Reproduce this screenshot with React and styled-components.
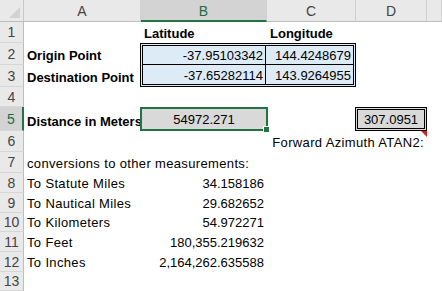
import React from 'react';
import styled, { createGlobalStyle, css } from 'styled-components';

const GlobalStyle = createGlobalStyle`
  html, body {
    margin: 0;
    padding: 0;
    background: #fff;
  }
  body {
    font-family: "Liberation Sans", Arial, sans-serif;
    color: #000;
  }
`;

const COLS = [24, 117, 126, 89, 71, 15];
const ROWS = [22, 21, 22, 22, 20, 24, 21, 21, 20, 20, 19, 20, 20, 19];

const Sheet = styled.div`
  display: grid;
  grid-template-columns: ${COLS.map(c => c + 'px').join(' ')};
  grid-template-rows: ${ROWS.map(r => r + 'px').join(' ')};
  width: 442px;
  height: 291px;
  overflow: hidden;
  font-size: 13px;
`;

const Corner = styled.div`
  grid-column: 1;
  grid-row: 1;
  background: #e9e9e9;
  border-right: 1px solid #c8c8c8;
  border-bottom: 1px solid #bdbdbd;
  position: relative;
  &::after {
    content: '';
    position: absolute;
    right: 3px;
    bottom: 3px;
    border-style: solid;
    border-width: 0 0 11px 11px;
    border-color: transparent transparent #d2d2d2 transparent;
  }
`;

const ColHead = styled.div`
  grid-column: ${p => p.col};
  grid-row: 1;
  display: flex;
  align-items: center;
  justify-content: center;
  background: ${p => (p.selected ? '#d3d3d3' : '#e9e9e9')};
  color: ${p => (p.selected ? '#1e6b41' : '#444')};
  border-right: 1px solid #d0d0d0;
  border-bottom: ${p => (p.selected ? '2px solid #217346' : '1px solid #bdbdbd')};
  font-size: 14px;
  padding-top: ${p => (p.selected ? '2px' : '1px')};
`;

const RowHead = styled.div`
  grid-column: 1;
  grid-row: ${p => p.row};
  display: flex;
  align-items: center;
  justify-content: center;
  background: ${p => (p.selected ? '#d3d3d3' : '#e9e9e9')};
  color: ${p => (p.selected ? '#1e6b41' : '#444')};
  border-right: ${p => (p.selected ? '2px solid #217346' : '1px solid #bdbdbd')};
  border-bottom: 1px solid #d6d6d6;
  font-size: 14px;
`;

const Cell = styled.div`
  grid-column: ${p => p.col} / span ${p => p.span || 1};
  grid-row: ${p => p.row};
  display: flex;
  align-items: flex-end;
  justify-content: ${p =>
    p.align === 'right' ? 'flex-end' : p.align === 'center' ? 'center' : 'flex-start'};
  padding: 0 3px 2px 3px;
  min-width: 0;
  white-space: nowrap;
  font-weight: ${p => (p.bold ? 700 : 400)};
  letter-spacing: ${p => (p.bold || p.numeric ? '0' : '0.35px')};
  overflow: ${p => (p.clip ? 'hidden' : 'visible')};
  position: relative;
`;

const Table = styled.div`
  grid-column: 3 / span 2;
  grid-row: 3 / span 2;
  display: grid;
  grid-template-columns: 123px 1fr;
  grid-template-rows: 1fr 1fr;
  margin: 0 0 0 -1px;
  border: 3px double #000;
  background: #ddebf7;
  z-index: 1;
`;

const TableCell = styled.div`
  display: flex;
  align-items: flex-end;
  justify-content: flex-end;
  padding: 0 2px 1px 3px;
  ${p => p.right && css`border-right: 1px solid #000;`}
  ${p => p.bottom && css`border-bottom: 1px solid #000;`}
`;

const GrayBox = styled.div`
  grid-column: ${p => p.col};
  grid-row: ${p => p.row};
  display: flex;
  align-items: center;
  justify-content: center;
  background: #d9d9d9;
  padding-top: 1px;
  position: relative;
  ${p =>
    p.active
      ? css`
          border: 2px solid #217346;
          margin: 0 -1px 0 -1px;
          &::after {
            content: '';
            position: absolute;
            right: -4px;
            bottom: -4px;
            width: 5px;
            height: 5px;
            background: #217346;
            border: 1px solid #fff;
          }
        `
      : css`
          border: 3px double #000;
          margin: 0 0 0 -1px;
        `}
`;

const Comment = styled(Cell)`
  &::before {
    content: '';
    position: absolute;
    right: 0;
    top: 0;
    border-style: solid;
    border-width: 0 6px 6px 0;
    border-color: transparent #d81f1f transparent transparent;
  }
`;

const conversions = [
  ['To Statute Miles', '34.158186'],
  ['To Nautical Miles', '29.682652'],
  ['To Kilometers', '54.972271'],
  ['To Feet', '180,355.219632'],
  ['To Inches', '2,164,262.635588'],
];

export default function App() {
  const letters = ['A', 'B', 'C', 'D', ''];
  return (
    <>
      <GlobalStyle />
      <Sheet>
        <Corner />
        {letters.map((l, i) => (
          <ColHead key={i} col={i + 2} selected={l === 'B'}>
            {l}
          </ColHead>
        ))}
        {ROWS.slice(1).map((_, i) => (
          <RowHead key={i} row={i + 2} selected={i + 1 === 5}>
            {i + 1}
          </RowHead>
        ))}

        <Cell col={3} row={2} bold>Latitude</Cell>
        <Cell col={4} row={2} bold>Longitude</Cell>

        <Cell col={2} row={3} bold>Origin Point</Cell>
        <Cell col={2} row={4} bold>Destination Point</Cell>
        <Table>
          <TableCell right bottom>-37.95103342</TableCell>
          <TableCell bottom>144.4248679</TableCell>
          <TableCell right>-37.65282114</TableCell>
          <TableCell>143.9264955</TableCell>
        </Table>

        <Cell col={2} row={6} bold clip>Distance in Meters</Cell>
        <GrayBox col={3} row={6} active>54972.271</GrayBox>
        <GrayBox col={5} row={6}>307.0951</GrayBox>

        <Comment col={5} row={7} align="right">Forward Azimuth ATAN2:</Comment>

        <Cell col={2} row={8}>conversions to other measurements:</Cell>
        {conversions.map(([label, value], i) => (
          <React.Fragment key={label}>
            <Cell col={2} row={9 + i}>{label}</Cell>
            <Cell col={3} row={9 + i} align="right" numeric>{value}</Cell>
          </React.Fragment>
        ))}
      </Sheet>
    </>
  );
}
